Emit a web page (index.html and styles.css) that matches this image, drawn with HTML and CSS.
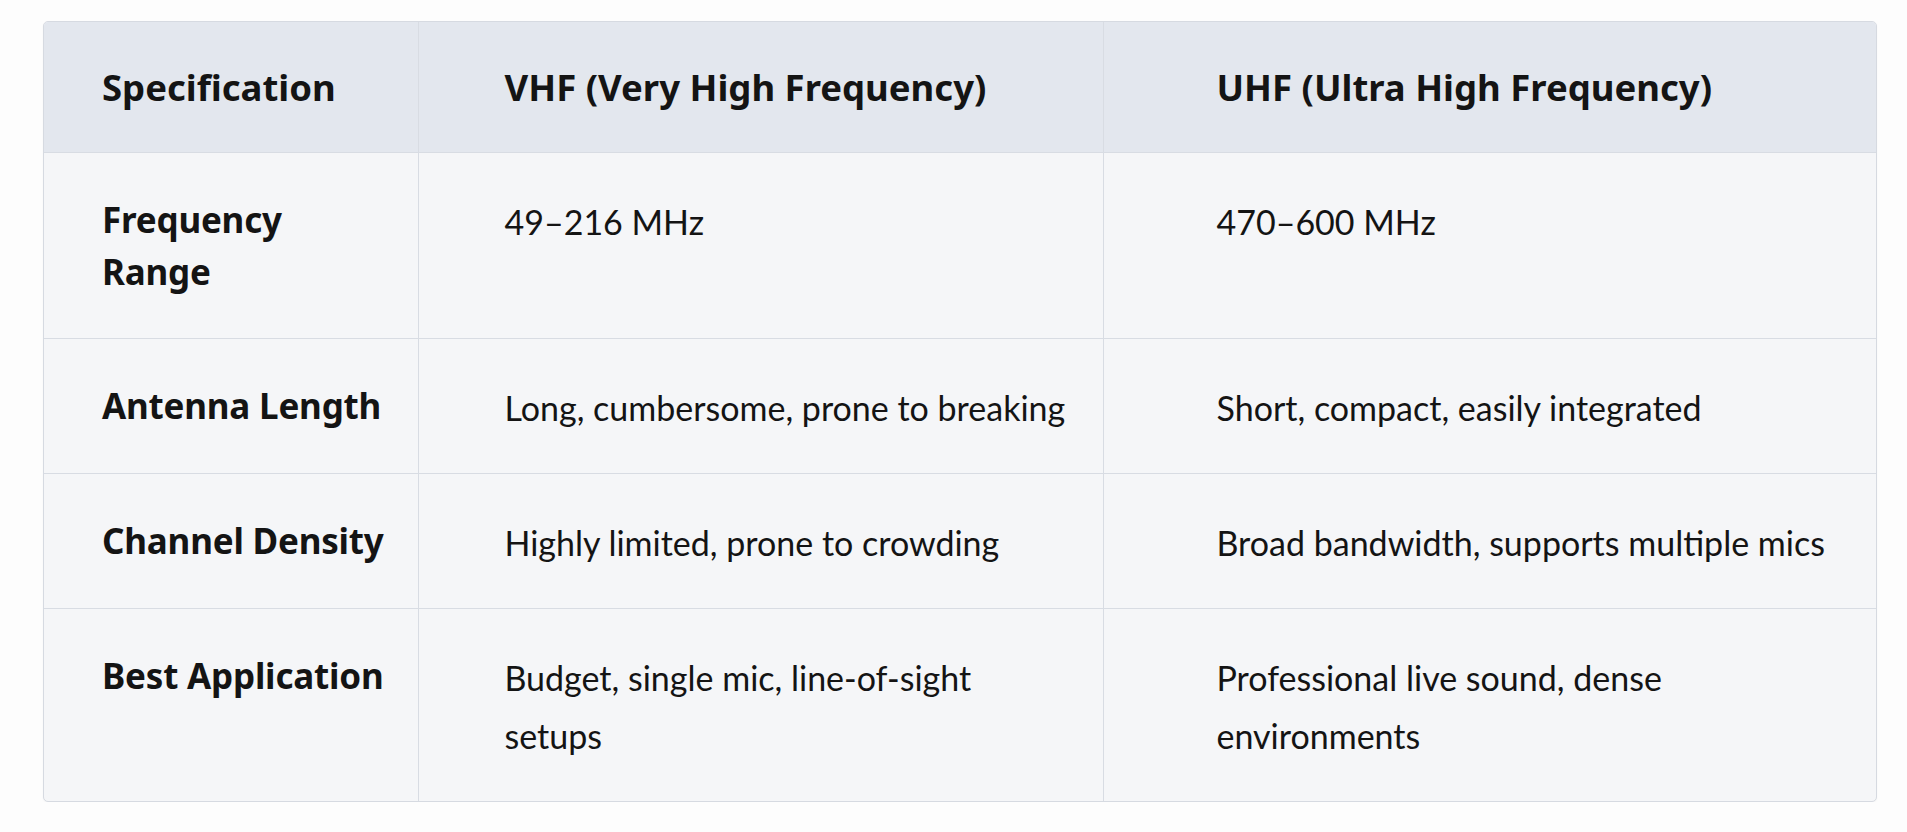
FILE: index.html
```html
<!DOCTYPE html>
<html lang="en">
<head>
<meta charset="utf-8">
<title>VHF vs UHF</title>
<link rel="stylesheet" href="styles.css">
</head>
<body>
<div class="table-wrap">
  <table class="spec-table">
    <colgroup>
      <col class="c1">
      <col class="c2">
      <col class="c3">
    </colgroup>
    <thead>
      <tr>
        <th class="col-a">Specification</th>
        <th class="col-b">VHF (Very High Frequency)</th>
        <th class="col-c">UHF (Ultra High Frequency)</th>
      </tr>
    </thead>
    <tbody>
      <tr>
        <th class="col-a">Frequency<br>Range</th>
        <td class="col-b">49–216 MHz</td>
        <td class="col-c">470–600 MHz</td>
      </tr>
      <tr>
        <th class="col-a">Antenna Length</th>
        <td class="col-b">Long, cumbersome, prone to breaking</td>
        <td class="col-c">Short, compact, easily integrated</td>
      </tr>
      <tr>
        <th class="col-a">Channel Density</th>
        <td class="col-b">Highly limited, prone to crowding</td>
        <td class="col-c">Broad bandwidth, supports multiple mics</td>
      </tr>
      <tr>
        <th class="col-a">Best Application</th>
        <td class="col-b">Budget, single mic, line-of-sight<br>setups</td>
        <td class="col-c">Professional live sound, dense<br>environments</td>
      </tr>
    </tbody>
  </table>
</div>
</body>
</html>
```

FILE: styles.css
```css
html, body {
  margin: 0;
  padding: 0;
  background: #fdfdfd;
}

body {
  padding: 21px 32px 0 43px;
  font-family: "Lato", "Noto Sans", sans-serif;
  color: #141414;
}

.table-wrap {
  width: 1832px;
  border: 1px solid #d6dae1;
  border-radius: 5px;
  overflow: hidden;
  background: #f5f6f8;
  box-shadow: 0 1px 2px rgba(0, 0, 0, 0.04);
}

.spec-table {
  width: 100%;
  table-layout: fixed;
  border-collapse: collapse;
}

.c1 { width: 374px; }
.c2 { width: 685px; }

.spec-table th,
.spec-table td {
  text-align: left;
  vertical-align: top;
  border-left: 1px solid #d8dce3;
  border-top: 1px solid #d8dce3;
}

.spec-table tr > :first-child { border-left: none; }
.spec-table thead tr > * { border-top: none; }

.spec-table th {
  font-family: "Noto Sans", "Open Sans", sans-serif;
  font-weight: 700;
  font-size: 35px;
  line-height: 52px;
  padding-top: 41px;
  padding-bottom: 40px;
  letter-spacing: -0.2px;
}

.spec-table td {
  font-family: "Lato", "Noto Sans", sans-serif;
  font-weight: 400;
  font-size: 34px;
  line-height: 58px;
  padding-top: 40px;
  padding-bottom: 36px;
}

.spec-table thead th {
  background: #e3e7ee;
  height: 130px;
  font-size: 36.5px;
  letter-spacing: 0;
  padding-top: 39px;
  padding-bottom: 0;
  box-sizing: border-box;
}

.col-a { padding-left: 58px; padding-right: 10px; }
.col-b { padding-left: 86px; padding-right: 10px; }
.col-c { padding-left: 113px; padding-right: 10px; }
```
